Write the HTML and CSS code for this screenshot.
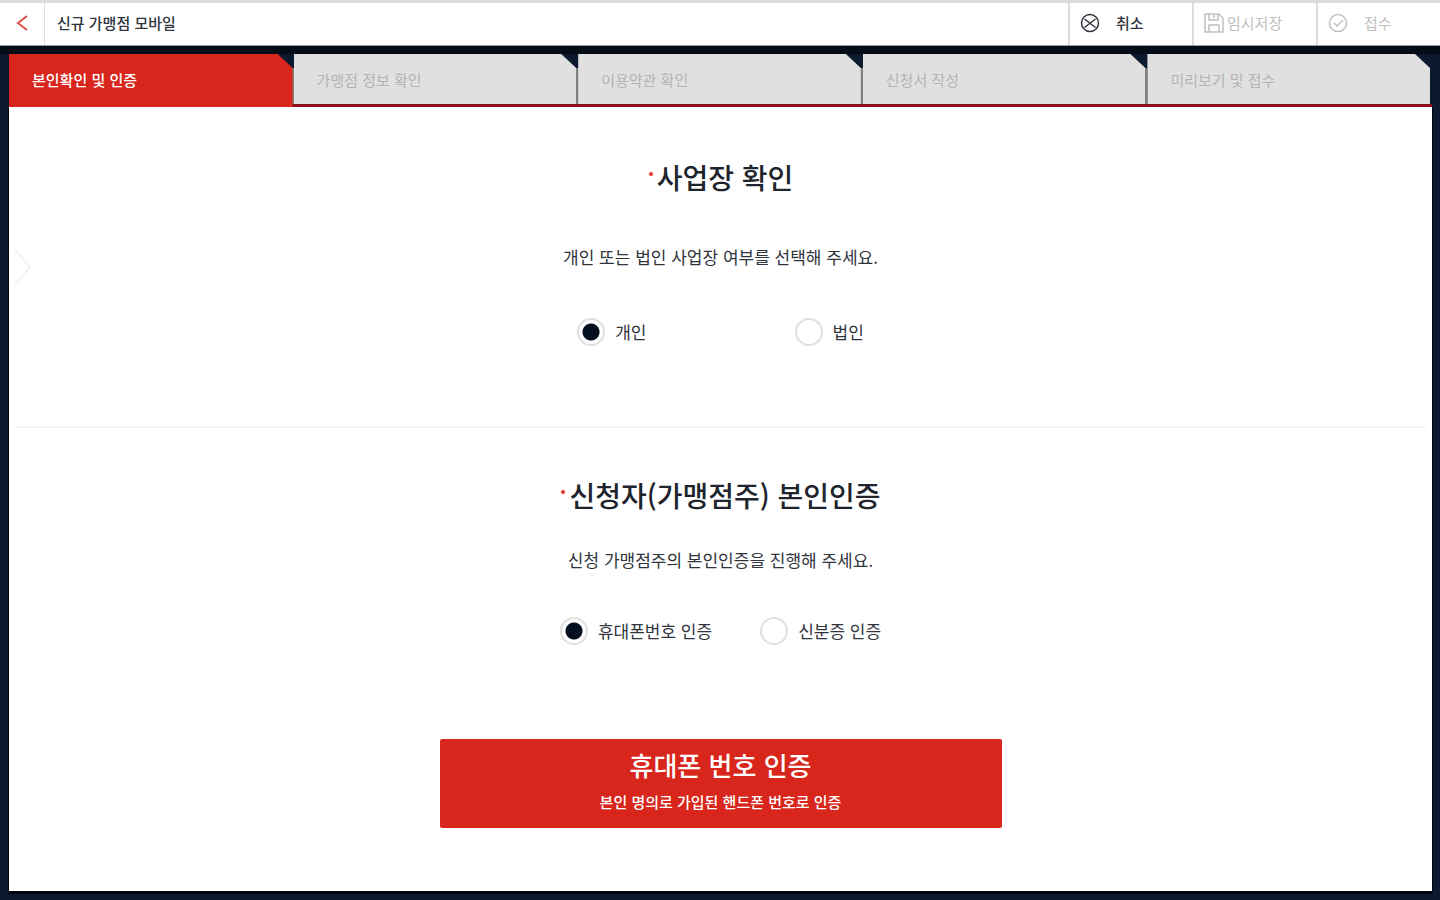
FILE: index.html
```
<!DOCTYPE html>
<html lang="ko">

<head>
  <meta charset="UTF-8">
  <meta name="viewport" content="width=device-width, initial-scale=1.0">
  <title>신규 가맹점 모바일</title>
  <link rel="stylesheet" href="styles.css">
</head>

<body>
  <header class="header">
    <button class="back" type="button" aria-label="뒤로">
      <svg width="12" height="16" viewBox="0 0 12 16"><path d="M11 1 2 8l9 7" /></svg>
    </button>
    <h1 class="title">신규 가맹점 모바일</h1>
    <div class="actions">
      <button class="action" type="button">
        <svg width="20" height="20" viewBox="0 0 20 20">
          <circle cx="10" cy="10" r="8.5" />
          <path d="m4.5 6 11 8.5M15.5 6l-11 8.5" />
        </svg>
        취소
      </button>
      <button class="action save" type="button" disabled>
        <svg width="20" height="20" viewBox="0 0 20 20">
          <path d="M1 1h14l4 4v14H1zM5 1v6h9V1M10 2v3M5 19v-7h10v7" />
        </svg>
        임시저장
      </button>
      <button class="action" type="button" disabled>
        <svg width="20" height="20" viewBox="0 0 20 20">
          <circle cx="10" cy="10" r="8.5" />
          <path d="m6 10 3 3 6-6" />
        </svg>
        접수
      </button>
    </div>
  </header>

  <main class="wrap">
    <nav>
      <ul class="tabs">
        <li><a class="on" href="#step1">본인확인 및 인증</a></li>
        <li><a href="#step2">가맹점 정보 확인</a></li>
        <li><a href="#step3">이용약관 확인</a></li>
        <li><a href="#step4">신청서 작성</a></li>
        <li><a href="#step5">미리보기 및 접수</a></li>
      </ul>
    </nav>

    <form class="panel" id="step1">
      <button class="drawer" type="button" aria-label="메뉴 열기">
        <svg width="18" height="38" viewBox="0 0 18 38"><path d="m1 2 15 17L1 36" /></svg>
      </button>

      <section class="section store">
        <h2><span class="dot"></span>사업장 확인</h2>
        <p>개인 또는 법인 사업장 여부를 선택해 주세요.</p>
        <div class="radios">
          <label><input type="radio" name="store" checked>개인</label>
          <label><input type="radio" name="store">법인</label>
        </div>
      </section>

      <section class="section owner">
        <h2><span class="dot"></span>신청자(가맹점주) 본인인증</h2>
        <p>신청 가맹점주의 본인인증을 진행해 주세요.</p>
        <div class="radios">
          <label><input type="radio" name="cert" checked>휴대폰번호 인증</label>
          <label><input type="radio" name="cert">신분증 인증</label>
        </div>
        <button class="submit" type="button">
          <strong>휴대폰 번호 인증</strong>
          <span>본인 명의로 가입된 핸드폰 번호로 인증</span>
        </button>
      </section>
    </form>
  </main>
</body>

</html>
```
FILE: styles.css
```
* {
  box-sizing: border-box;
  margin: 0;
  padding: 0;
}

body {
  display: flex;
  flex-direction: column;
  min-height: 100vh;
  background: #0c1a30;
  color: #30343c;
  font-family: "Noto Sans CJK KR", sans-serif;
  font-size: 17px;
}

button {
  border: 0;
  background: none;
  color: inherit;
  font: inherit;
}

svg {
  flex: none;
  fill: none;
  stroke: currentColor;
}

/* header */
.header {
  display: flex;
  height: 46px;
  border-top: 3px solid #dcdcdc;
  border-bottom: 1px solid #999;
  background: #fff;
  font-size: 15px;
}

.back {
  display: flex;
  align-items: center;
  justify-content: center;
  width: 45px;
  padding-bottom: 2px;
  border-right: 1px solid #ddd;
  color: #e2504a;
  stroke-width: 2;
}

.title {
  flex: 1;
  padding-left: 12px;
  font-size: 15px;
  font-weight: 500;
  line-height: 40px;
}

.actions {
  display: flex;
}

.action {
  display: flex;
  align-items: center;
  gap: 16px;
  width: 124px;
  padding: 0 10px 3px;
  border-left: 2px solid #ddd;
  font-weight: 500;
  stroke-width: 1.5;
}

.action.save {
  gap: 3px;
}

.action:disabled {
  color: #c0c0c0;
  font-weight: 400;
}

/* tabs */
.wrap {
  display: flex;
  flex: 1;
  flex-direction: column;
  padding: 0 8px 9px 9px;
  border-top: 8px solid #040c17;
}

.tabs {
  display: grid;
  grid-template-columns: repeat(5, 1fr);
  border-bottom: 3px solid #8c0e16;
  list-style: none;
}

/* grey seam below the cut corner */
.tabs li {
  background: linear-gradient(#0c1a30 14px, #808080 14px);
}

.tabs li:last-child {
  background: none;
}

.tabs a {
  display: block;
  height: 50px;
  margin-right: 2px;
  padding-left: 23px;
  background: #e0e0e0;
  clip-path: polygon(0 0, calc(100% - 15px) 0, 100% 14px, 100% 100%, 0 100%);
  color: #b4b4b4;
  font-size: 15px;
  line-height: 52px;
  text-decoration: none;
}

.tabs a.on {
  height: 53px;
  margin: 0 1px -3px 0;
  background: #d9261c;
  color: #fff;
  font-weight: 500;
}

/* content */
.panel {
  position: relative;
  flex: 1;
  background: #fff;
  box-shadow: 0 2px 0 1px #02060c;
}

.drawer {
  position: absolute;
  top: 141px;
  left: 5px;
  color: #e4e4ea;
}

.section {
  display: flex;
  flex-direction: column;
  align-items: center;
  margin: 0 6px;
}

.store {
  padding: 50px 0 80px;
  border-bottom: 2px solid #f3f3f3;
}

.owner {
  padding: 47px 0 63px;
}

h2 {
  display: flex;
  color: #20242c;
  font-size: 28px;
  font-weight: 500;
  line-height: 40px;
}

.dot {
  width: 6px;
  height: 6px;
  margin: 14px 3px 0 0;
  border: 1px solid #fff;
  border-radius: 50%;
  background: #e2352c;
}

.section p {
  margin: 48px 0 49px;
  line-height: 24px;
}

.radios {
  display: flex;
  gap: 148px;
}

.owner p {
  margin: 33px 0 45px;
}

.owner .radios {
  gap: 48px;
}

.radios label {
  display: flex;
  align-items: center;
  gap: 10px;
  line-height: 28px;
}

.radios input {
  appearance: none;
  width: 28px;
  height: 28px;
  border: 2px solid #e0e0e0;
  border-radius: 50%;
}

.radios input:checked {
  background: radial-gradient(circle, #04101f 8px, #fff 9px);
}

.submit {
  display: flex;
  flex-direction: column;
  align-items: center;
  width: 562px;
  max-width: 100%;
  margin-top: 94px;
  padding: 7px 0 14px;
  border-radius: 2px;
  background: #d9261c;
  color: #fff;
}

.submit strong {
  font-size: 26px;
  font-weight: 500;
  line-height: 38px;
}

.submit span {
  margin-top: 6px;
  font-size: 15px;
  font-weight: 500;
  line-height: 24px;
}
```
